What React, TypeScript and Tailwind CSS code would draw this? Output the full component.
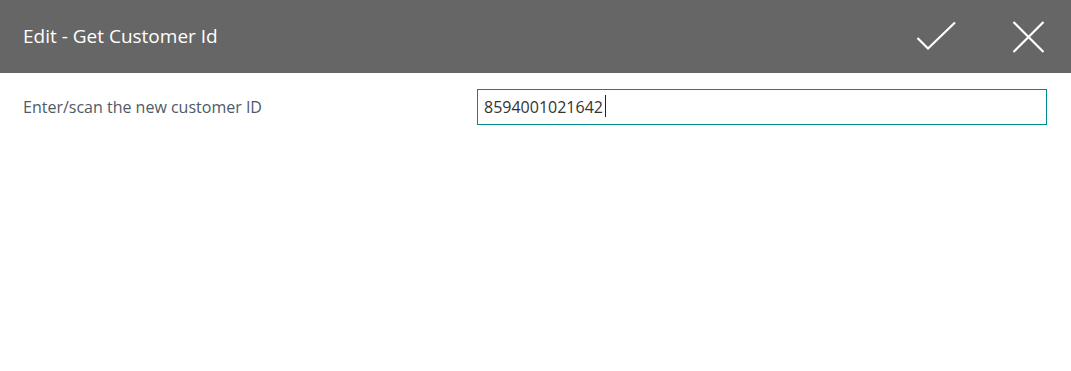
import { useEffect, useRef, useState } from 'react';

export default function App() {
  const [customerId, setCustomerId] = useState('8594001021642');
  const [focused, setFocused] = useState(true);
  const inputRef = useRef<HTMLInputElement>(null);

  useEffect(() => {
    const el = inputRef.current;
    if (el) {
      el.focus();
      el.setSelectionRange(el.value.length, el.value.length);
    }
  }, []);

  return (
    <div className="w-[1071px] h-[371px] bg-white font-['Open_Sans',sans-serif]">
      <header className="h-[73px] bg-[#666666] flex items-center justify-between pl-[23px] pr-[26px]">
        <h1 className="text-white text-[19px] leading-none pb-[1px]">Edit - Get Customer Id</h1>
        <div className="flex items-center gap-[54px]">
          <button className="w-[42px] h-[42px] flex items-center justify-center" aria-label="OK">
            <svg width="42" height="32" viewBox="0 0 42 32" fill="none" stroke="white" strokeWidth="2.2">
              <path d="M1.5 17 L12 27.5 L39 1.5" />
            </svg>
          </button>
          <button className="w-[33px] h-[33px] flex items-center justify-center" aria-label="Close">
            <svg width="33" height="32" viewBox="0 0 33 32" fill="none" stroke="white" strokeWidth="2.2">
              <path d="M1.5 1 L31.5 31 M31.5 1 L1.5 31" />
            </svg>
          </button>
        </div>
      </header>

      <div className="flex items-center pl-[23px] pr-[24px] pt-[16px]">
        <label htmlFor="cid" className="w-[454px] text-[16px] text-[#505a66]">
          Enter/scan the new customer ID
        </label>
        <div className="relative flex-1">
          <input
            id="cid"
            ref={inputRef}
            value={customerId}
            onChange={(e) => setCustomerId(e.target.value)}
            onFocus={() => setFocused(true)}
            onBlur={() => setFocused(false)}
            className="w-full h-[36px] border border-[#008b8b] px-[6px] text-[16px] text-[#333333] outline-none caret-transparent"
          />
          {focused && customerId === '8594001021642' && (
            <span className="absolute left-[128px] top-[6px] w-px h-[22px] bg-[#222] pointer-events-none" />
          )}
        </div>
      </div>
    </div>
  );
}
